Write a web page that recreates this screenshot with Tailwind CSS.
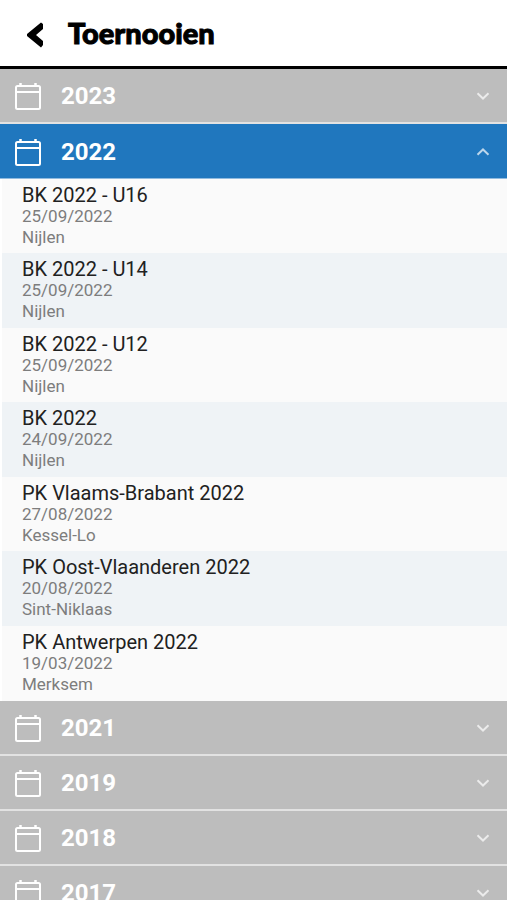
<!DOCTYPE html>
<html lang="nl">
<head>
<meta charset="utf-8">
<meta name="viewport" content="width=device-width, initial-scale=1">
<title>Toernooien</title>
<script src="https://cdn.jsdelivr.net/npm/@tailwindcss/browser@4"></script>
</head>
<body class="h-screen overflow-hidden bg-white font-['Roboto',sans-serif]">
<svg class="hidden" aria-hidden="true">
  <symbol id="calendar" viewBox="0 0 28 28">
    <rect x="2" y="4" width="24" height="23" rx="1.500" fill="none" stroke="currentColor" stroke-width="2"/>
    <path d="M2 10H26" stroke="currentColor" stroke-width="2"/>
    <path d="M6.500 1V4M21.500 1V4" stroke="currentColor" stroke-width="2.500"/>
  </symbol>
  <symbol id="down" viewBox="0 0 14 8"><path d="M1.500 1.200L7 6.500L12.500 1.200" fill="none" stroke="currentColor" stroke-width="2"/></symbol>
  <symbol id="up" viewBox="0 0 14 8"><path d="M1.500 6.800L7 1.500L12.500 6.800" fill="none" stroke="currentColor" stroke-width="2"/></symbol>
</svg>
<header class="flex h-[69px] items-center border-b-3 border-black pl-6">
  <button type="button" aria-label="Terug" class="flex w-11 shrink-0 pt-3 pb-2 pl-[3px]">
    <svg class="h-[26px] w-[17px]" viewBox="0 0 17 26"><path d="M14 .5L16 2V7L9 13L16 19V23L14 25.500L0 14V12Z" fill="#000"/></svg>
  </button>
  <h1 class="font-['Lato'] text-[29px] leading-9 font-black text-black [-webkit-text-stroke:1px_#000]">Toernooien</h1>
</header>
<main id="years"></main>
<template id="year">
  <section>
    <h2>
      <button type="button" class="flex h-[55px] w-full items-center border-b-2 border-[#e2e2e2] bg-[#bdbdbd] pt-px pr-[17px] pl-3.5 text-left text-white aria-expanded:border-b aria-expanded:border-[#90bbdf] aria-expanded:bg-[#2077be]">
        <svg class="h-7 w-7 shrink-0"><use href="#calendar"/></svg>
        <span class="ml-[19px] flex-1 text-[24px] leading-7 font-bold"></span>
        <svg class="h-2 w-3.5 shrink-0 opacity-70"><use href="#down"/></svg>
      </button>
    </h2>
  </section>
</template>
<template id="item">
  <li class="ml-0.5 bg-[#fafafa] px-5 pt-[5px] pb-[5px] last:pb-1.5 even:bg-[#eff3f6] even:pb-1.5">
    <h3 class="text-[20px] leading-[22px] text-[#212121]"></h3>
    <p class="text-[17px] leading-[21px] text-[#7d7d7d]"></p>
    <p class="text-[17px] leading-[21px] text-[#7d7d7d]"></p>
  </li>
</template>
<script>
const tournaments = [
  ["BK 2022 - U16", "25/09/2022", "Nijlen"],
  ["BK 2022 - U14", "25/09/2022", "Nijlen"],
  ["BK 2022 - U12", "25/09/2022", "Nijlen"],
  ["BK 2022", "24/09/2022", "Nijlen"],
  ["PK Vlaams-Brabant 2022", "27/08/2022", "Kessel-Lo"],
  ["PK Oost-Vlaanderen 2022", "20/08/2022", "Sint-Niklaas"],
  ["PK Antwerpen 2022", "19/03/2022", "Merksem"]
];
const clone = id => document.getElementById(id).content.firstElementChild.cloneNode(true);
for (const year of [2023, 2022, 2021, 2019, 2018, 2017]) {
  const section = clone("year");
  const open = year === 2022;
  section.querySelector("span").textContent = year;
  section.querySelector("button").setAttribute("aria-expanded", open);
  if (open) {
    section.querySelectorAll("use")[1].setAttribute("href", "#up");
    const list = document.createElement("ul");
    for (const texts of tournaments) {
      const li = clone("item");
      texts.forEach((text, i) => { li.children[i].textContent = text; });
      list.append(li);
    }
    section.append(list);
  }
  document.getElementById("years").append(section);
}
</script>
</body>
</html>
